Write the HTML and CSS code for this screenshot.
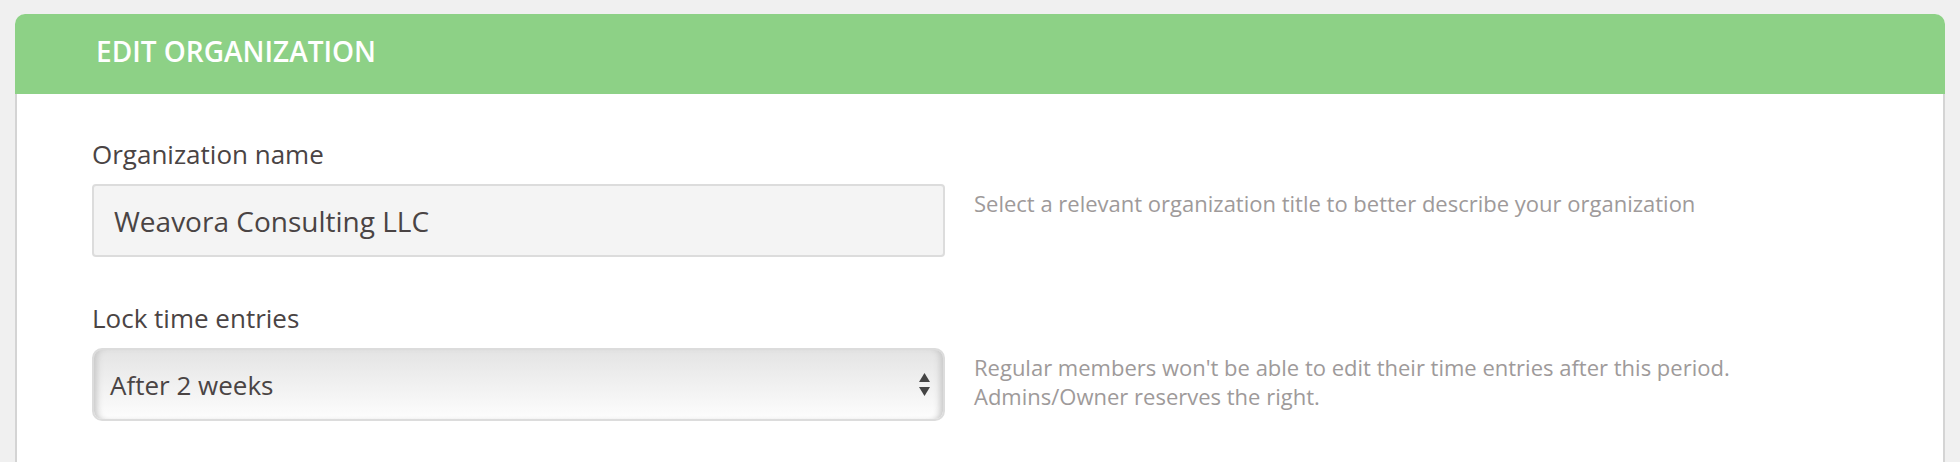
FILE: index.html
```html
<!doctype html>
<html>
    <head>
        <title>Edit organization</title>
        <link rel="stylesheet" href="styles.css">
    </head>
    <body>
        <div class="panel">
            <div class="panel-heading">EDIT ORGANIZATION</div>
            <div class="panel-body">
                <div class="field">
                    <div class="field-main">
                        <label for="orgName">Organization name</label>
                        <input class="text-input" id="orgName" value="Weavora Consulting LLC">
                    </div>
                    <div class="field-help">
                        Select a relevant organization title to better describe your organization
                    </div>
                </div>
                <div class="field">
                    <div class="field-main">
                        <label for="lockEntries">Lock time entries</label>
                        <div class="select-box" id="lockEntries">
                            <span class="select-value">After 2 weeks</span>
                            <svg class="select-arrows" width="11" height="23" viewBox="0 0 11 23">
                                <polygon points="5.5,0 11,9 0,9" fill="#444"/>
                                <polygon points="0,14 11,14 5.5,23" fill="#444"/>
                            </svg>
                        </div>
                    </div>
                    <div class="field-help">
                        Regular members won't be able to edit their time entries after this period.<br>
                        Admins/Owner reserves the right.
                    </div>
                </div>
            </div>
        </div>
    </body>
</html>
```

FILE: styles.css
```css
body {
    margin: 0;
    background-color: #f0f0f0;
    font-family: "Open Sans", sans-serif;
    color: #4a4444;
}
.panel {
    margin: 14px 15px 0 15px;
    border-radius: 10px 10px 0 0;
    overflow: hidden;
    background-color: #fff;
    height: 460px;
}
.panel-heading {
    background-color: #8dd186;
    color: #fff;
    height: 80px;
    line-height: 74px;
    padding-left: 81px;
    font-size: 28px;
    font-weight: 600;
}
.panel-body {
    border-left: 2px solid #d4d4d4;
    border-right: 2px solid #d4d4d4;
    padding: 44px 0 0 75px;
    height: 100%;
}
.field {
    display: flex;
    gap: 29px;
    margin-bottom: 45px;
}
.field-main {
    width: 853px;
}
label {
    display: block;
    font-size: 26px;
    line-height: 32px;
    margin-bottom: 14px;
}
.text-input {
    display: block;
    box-sizing: border-box;
    width: 853px;
    height: 73px;
    border: 2px solid #dcdcdc;
    border-radius: 4px;
    background-color: #f4f4f4;
    padding: 0 20px;
    font-family: "Open Sans", sans-serif;
    font-size: 28px;
    color: #4a4444;
    outline: none;
}
.select-box {
    box-sizing: border-box;
    width: 853px;
    height: 73px;
    border: 2px solid #dcdcdc;
    border-radius: 10px;
    background: linear-gradient(#e4e4e4, #fdfdfd);
    box-shadow: inset 7px 0 6px -4px #c8c8c8, inset -7px 0 6px -4px #c8c8c8;
    display: flex;
    align-items: center;
    justify-content: space-between;
    padding: 0 13px 0 16px;
    font-size: 26px;
}
.field-help {
    padding-top: 51px;
    font-size: 22px;
    line-height: 29px;
    color: #9e9a9a;
}
```
